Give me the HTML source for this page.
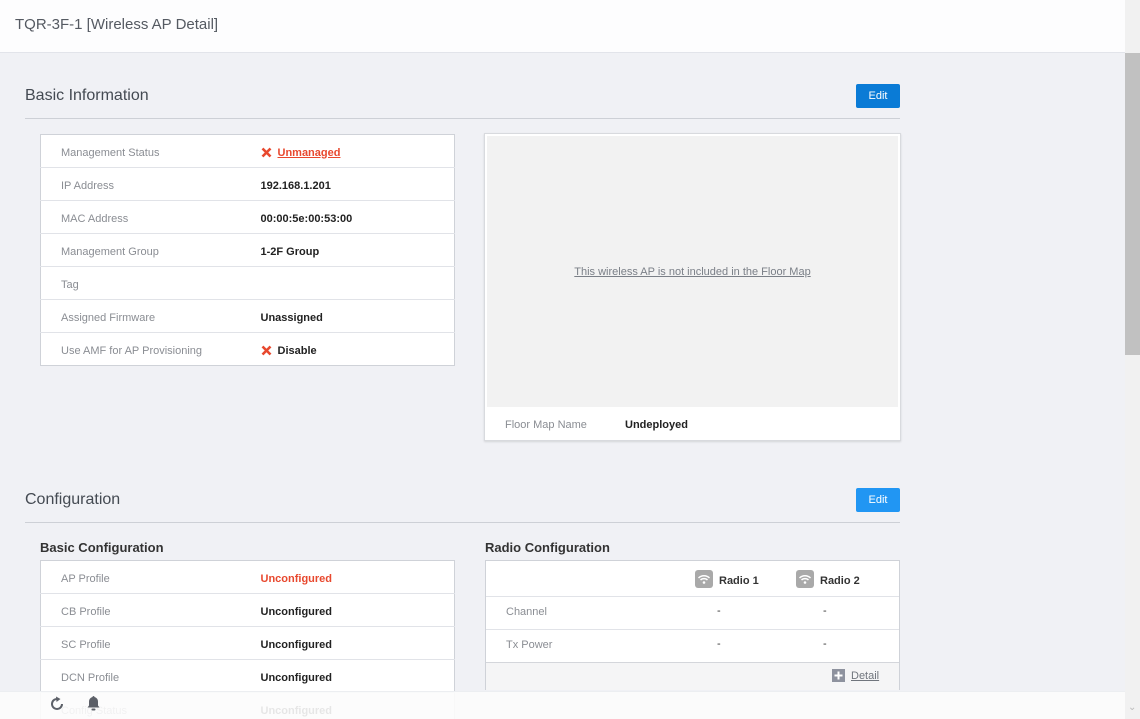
<!DOCTYPE html>
<html style="overflow:hidden;height:719px"><head><meta charset="utf-8">
<style>
*{margin:0;padding:0;box-sizing:border-box}
body{width:1140px;height:719px;overflow:hidden;background:#f0f1f5;font-family:"Liberation Sans",Arial,sans-serif;position:relative}
.abs{position:absolute}
.hdr{left:0;top:0;width:1125px;height:53px;background:#fdfdfe;border-bottom:1px solid #e2e4ea}
.hdr span{position:absolute;left:15px;top:16px;font-size:15px;color:#555a62}
.sb{left:1125px;top:0;width:15px;height:719px;background:#f1f1f1}
.thumb{left:1125px;top:53px;width:15px;height:302px;background:#c1c1c1}
.h2{font-size:16px;color:#444a52}
.line{height:1px;background:#cdd0d6;left:25px;width:875px}
.btn{width:44px;height:24px;border-radius:2px;color:#fff;font-size:11px;text-align:center;line-height:24px}
table{border-collapse:collapse;background:#fff;font-size:11px}
.tbl{border:1px solid #cfd2d8}
.tbl td{height:33px;border-bottom:1px solid #e1e3e8;vertical-align:middle;padding-top:3px}
.tbl td.l{padding-left:20px;color:#8a8d93;width:220px}
.tbl td.v{color:#222;font-weight:bold}
.tbl td.v.red{color:#e8482e}
.x{display:inline-block;vertical-align:-2px;margin-right:6px}
.h3{font-size:13px;font-weight:bold;color:#333}
.wifi{display:inline-block;width:18px;height:18px;background:#a9a9a9;border-radius:3px;vertical-align:-4px;margin-right:6px}
</style></head><body>
<div class="abs hdr"><span>TQR-3F-1 [Wireless AP Detail]</span></div>
<div class="abs sb"></div><div class="abs thumb"></div>

<div class="abs h2" style="left:25px;top:87px">Basic Information</div>
<div class="abs btn" style="left:856px;top:84px;background:#0a7bd6">Edit</div>
<div class="abs line" style="top:118px"></div>

<table class="abs tbl" style="left:40px;top:134px;width:415px">
<tr><td class="l">Management Status</td><td class="v red"><svg class="x" width="11" height="11" viewBox="0 0 11 11"><path d="M1.5 1.5L9.5 9.5M9.5 1.5L1.5 9.5" stroke="#e8482e" stroke-width="2.6"/></svg><u>Unmanaged</u></td></tr>
<tr><td class="l">IP Address</td><td class="v">192.168.1.201</td></tr>
<tr><td class="l">MAC Address</td><td class="v">00:00:5e:00:53:00</td></tr>
<tr><td class="l">Management Group</td><td class="v">1-2F Group</td></tr>
<tr><td class="l">Tag</td><td class="v"></td></tr>
<tr><td class="l">Assigned Firmware</td><td class="v">Unassigned</td></tr>
<tr><td class="l" style="border-bottom:0">Use AMF for AP Provisioning</td><td class="v" style="border-bottom:0"><svg class="x" width="11" height="11" viewBox="0 0 11 11"><path d="M1.5 1.5L9.5 9.5M9.5 1.5L1.5 9.5" stroke="#e8482e" stroke-width="2.6"/></svg>Disable</td></tr>
</table>

<div class="abs" style="left:484px;top:133px;width:417px;height:308px;background:#fff;border:1px solid #d8dade;box-shadow:0 1px 2px rgba(0,0,0,.12)">
 <div class="abs" style="left:2px;top:2px;width:411px;height:271px;background:#f2f2f2"></div>
 <div class="abs" style="left:0;top:132px;width:415px;text-align:center;font-size:11px;color:#7a7f87;text-decoration:underline">This wireless AP is not included in the Floor Map</div>
 <div class="abs" style="left:20px;top:285px;font-size:11px;color:#8a8d93">Floor Map Name</div>
 <div class="abs" style="left:140px;top:285px;font-size:11px;color:#222;font-weight:bold">Undeployed</div>
</div>

<div class="abs h2" style="left:25px;top:491px">Configuration</div>
<div class="abs btn" style="left:856px;top:488px;background:#2196f3">Edit</div>
<div class="abs line" style="top:522px"></div>

<div class="abs h3" style="left:40px;top:540px">Basic Configuration</div>
<div class="abs" style="left:0;top:0;width:1140px;height:719px;overflow:hidden">
<table class="abs tbl" style="left:40px;top:560px;width:415px">
<tr><td class="l">AP Profile</td><td class="v red">Unconfigured</td></tr>
<tr><td class="l">CB Profile</td><td class="v">Unconfigured</td></tr>
<tr><td class="l">SC Profile</td><td class="v">Unconfigured</td></tr>
<tr><td class="l">DCN Profile</td><td class="v">Unconfigured</td></tr>
<tr><td class="l">Config Status</td><td class="v">Unconfigured</td></tr>
</table>
</div>

<div class="abs h3" style="left:485px;top:540px">Radio Configuration</div>
<div class="abs" style="left:485px;top:560px;width:415px;height:130px;background:#fff;border:1px solid #cfd2d8">
 <div class="abs" style="left:0;top:35px;width:413px;height:1px;background:#e1e3e8"></div>
 <div class="abs" style="left:0;top:68px;width:413px;height:1px;background:#e1e3e8"></div>
 <div class="abs" style="left:0;top:101px;width:413px;height:28px;background:#f5f5f6;border-top:1px solid #d4d6db"></div>
 <div class="abs" style="left:209px;top:9px;font-size:11px;font-weight:bold;color:#333"><span class="wifi"><svg width="18" height="18" viewBox="0 0 18 18"><path d="M3.5 8a8 8 0 0 1 11 0M5.5 10a5 5 0 0 1 7 0" stroke="#fff" stroke-width="1.5" fill="none"/><circle cx="9" cy="12.5" r="1.3" fill="#fff"/></svg></span>Radio 1</div>
 <div class="abs" style="left:310px;top:9px;font-size:11px;font-weight:bold;color:#333"><span class="wifi"><svg width="18" height="18" viewBox="0 0 18 18"><path d="M3.5 8a8 8 0 0 1 11 0M5.5 10a5 5 0 0 1 7 0" stroke="#fff" stroke-width="1.5" fill="none"/><circle cx="9" cy="12.5" r="1.3" fill="#fff"/></svg></span>Radio 2</div>
 <div class="abs" style="left:20px;top:45px;font-size:11px;color:#8a8d93">Channel</div>
 <div class="abs" style="left:231px;top:44px;font-size:11px;color:#333">-</div>
 <div class="abs" style="left:337px;top:44px;font-size:11px;color:#333">-</div>
 <div class="abs" style="left:20px;top:78px;font-size:11px;color:#8a8d93">Tx Power</div>
 <div class="abs" style="left:231px;top:77px;font-size:11px;color:#333">-</div>
 <div class="abs" style="left:337px;top:77px;font-size:11px;color:#333">-</div>
 <div class="abs" style="left:346px;top:108px;width:13px;height:13px;background:#8e929e"><svg width="13" height="13" viewBox="0 0 13 13"><path d="M6.5 2.5v8M2.5 6.5h8" stroke="#fff" stroke-width="2"/></svg></div>
 <div class="abs" style="left:365px;top:109px;font-size:11px;color:#70757d;text-decoration:underline">Detail</div>
</div>

<div class="abs" style="left:0;top:691px;width:1125px;height:28px;background:rgba(252,252,252,.9);border-top:1px solid #eceef1"></div>
<svg class="abs" style="left:49px;top:696px" width="16" height="16" viewBox="0 0 16 16"><path d="M9.5 3.2A5 5 0 1 0 13 8" stroke="#5c6068" stroke-width="2" fill="none"/><path d="M7 0.5l4.5 2.5-4 3z" fill="#5c6068"/></svg>
<svg class="abs" style="left:86px;top:695px" width="15" height="16" viewBox="0 0 15 16"><path d="M7.5 1a1 1 0 0 1 1 1 4.5 4.5 0 0 1 3.5 4.5v4l1.5 2h-12l1.5-2v-4A4.5 4.5 0 0 1 6.5 2a1 1 0 0 1 1-1z" fill="#5c6068"/><rect x="5.5" y="13.5" width="4" height="2" rx="1" fill="#5c6068"/></svg>
<div class="abs" style="left:1128px;top:702px;font-size:10px;color:#bbb">⌄</div>
</body></html>
